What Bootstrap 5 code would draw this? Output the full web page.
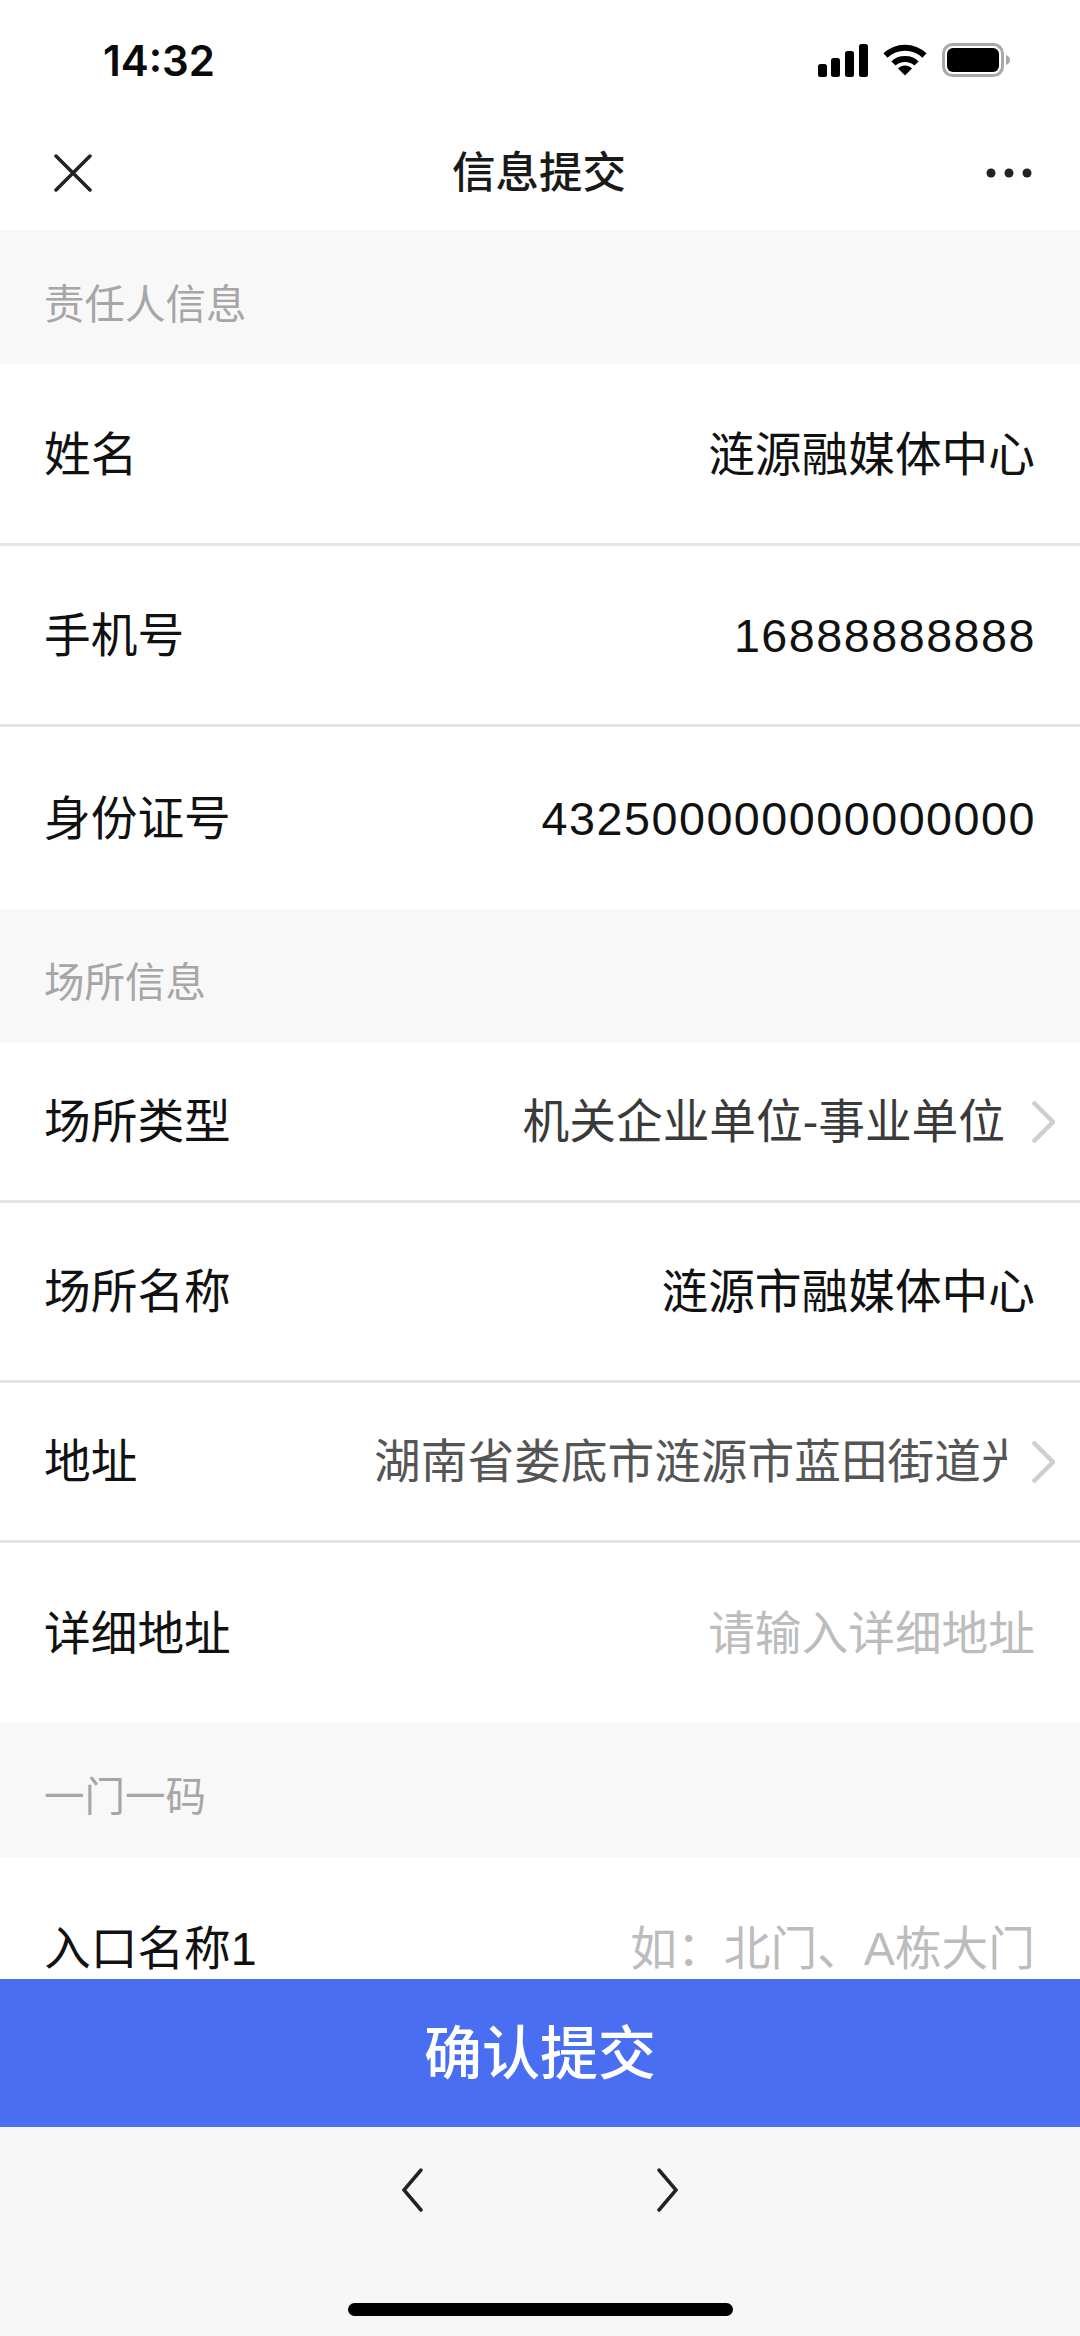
<!DOCTYPE html>
<html lang="zh-CN">
<head>
  <meta charset="UTF-8">
  <meta name="viewport" content="width=device-width, initial-scale=1.0">
  <title>信息提交</title>
  <link href="https://cdn.jsdelivr.net/npm/bootstrap@5.3.0/dist/css/bootstrap.min.css" rel="stylesheet">
  <style>
    html, body { height: 100%; }
    body {
      font-family: "Liberation Sans", "Noto Sans CJK SC", sans-serif;
      color: #111;
      background: #fff;
      overflow: hidden;
    }
    .screen { height: 2336px; }
    .status-bar { height: 115px; padding: 0 68px 0 103px; flex-shrink: 0; }
    .status-time { font-family: "Inter", sans-serif; font-size: 42px; font-weight: 600; color: #0a0a0a; margin-top: 6px; }
    .status-icons { gap: 15px; margin-top: 5px; }
    .title-bar { height: 115px; padding: 0 48px 0 54px; flex-shrink: 0; }
    .title-text { font-size: 43.500px; font-weight: 500; color: #1a1a1a; margin-top: 3px; }
    .form-scroll { overflow: hidden; min-height: 0; flex: 1 1 0; }
    .group-head {
      height: 134px;
      padding: 16px 44px 0;
      background: #f8f8f8;
      color: #a6a6a6;
      font-size: 40.500px;
    }
    .form-line.list-group-item {
      height: 181.500px;
      padding: 3px 45px 0 44px;
      border-bottom: 3px solid #e4e4e4;
      font-size: 46.700px;
      color: #111;
    }
    .form-line.line-mid.list-group-item { height: 180px; }
    .form-line.line-short.list-group-item { height: 160px; padding-right: 25px; }
    .form-line.line-tail.list-group-item { border-bottom: 0; height: 182px; }
    .line-value { overflow: hidden; white-space: nowrap; }
    .val-num { letter-spacing: 1.500px; margin-right: -1px; }
    .val-grey { color: #3a3a3a; margin-right: 2px; }
    .val-hint { color: #bcbcbc; }
    .addr-clip { width: 633px; color: #555; }
    .short-value { gap: 24px; }
    .submit-btn.btn {
      height: 148px;
      background: #4a6ef2;
      color: #fff;
      font-size: 58px;
      font-weight: 500;
      border: 0;
      border-radius: 0;
      flex-shrink: 0;
    }
    .bottom-bar { height: 209px; background: #f7f7f8; flex-shrink: 0; }
    .pager { gap: 234px; padding-top: 41px; }
    .home-bar { width: 385px; height: 13px; background: #000; border-radius: 7px; margin: 91px auto 0; }
  </style>
</head>
<body>
  <div class="screen d-flex flex-column">
    <!-- status bar -->
    <div class="status-bar d-flex justify-content-between align-items-center">
      <span class="status-time">14:32</span>
      <div class="status-icons d-flex align-items-center">
        <svg width="50" height="33" viewBox="0 0 50 33"><rect x="0" y="20" width="9" height="13" rx="2.500"/><rect x="13" y="14" width="9" height="19" rx="2.500"/><rect x="27" y="7" width="9" height="26" rx="2.500"/><rect x="41" y="0" width="9" height="33" rx="2.500"/></svg>
        <svg width="44" height="32" viewBox="0 0 44 32" fill="none" stroke="#000" stroke-width="6"><path d="M2.500 11.500C13.500 1 30.500 1 41.500 11.500"/><path d="M10.500 19.500C16.500 13.500 27.500 13.500 33.500 19.500"/><path d="M15 24.500L22 31.500L29 24.500C25 20.500 19 20.500 15 24.500Z" fill="#000" stroke="none"/></svg>
        <svg width="70" height="34" viewBox="0 0 70 34"><rect x="1.500" y="1.500" width="59" height="31" rx="9" fill="none" stroke="#a9a9a9" stroke-width="3"/><rect x="5" y="5" width="52" height="24" rx="6"/><path d="M64 12C67 13 68 15 68 17S67 21 64 22Z" fill="#a9a9a9"/></svg>
      </div>
    </div>

    <!-- title bar -->
    <div class="title-bar d-flex justify-content-between align-items-center">
      <svg width="38" height="38" viewBox="0 0 38 38" fill="none" stroke="#222" stroke-width="3.500" stroke-linecap="round"><path d="M2 2L36 36M36 2L2 36"/></svg>
      <span class="title-text">信息提交</span>
      <svg width="46" height="10" viewBox="0 0 46 10" fill="#222"><circle cx="5" cy="5" r="4.500"/><circle cx="23" cy="5" r="4.500"/><circle cx="41" cy="5" r="4.500"/></svg>
    </div>

    <!-- form -->
    <div class="form-scroll">
      <div class="group-head d-flex align-items-center">责任人信息</div>
      <ul class="list-group list-group-flush">
        <li class="list-group-item form-line d-flex justify-content-between align-items-center"><span>姓名</span><span class="line-value">涟源融媒体中心</span></li>
        <li class="list-group-item form-line d-flex justify-content-between align-items-center"><span>手机号</span><span class="line-value val-num">16888888888</span></li>
        <li class="list-group-item form-line d-flex justify-content-between align-items-center"><span>身份证号</span><span class="line-value val-num">432500000000000000</span></li>
      </ul>
      <div class="group-head d-flex align-items-center">场所信息</div>
      <ul class="list-group list-group-flush">
        <li class="list-group-item form-line line-short d-flex justify-content-between align-items-center">
          <span>场所类型</span>
          <span class="short-value d-flex align-items-center">
            <span class="line-value val-grey">机关企业单位-事业单位</span>
            <svg width="24" height="44" viewBox="0 0 24 44" fill="none" stroke="#cfcfcf" stroke-width="4.500"><path d="M2 2L22 22L2 42"/></svg>
          </span>
        </li>
        <li class="list-group-item form-line line-mid d-flex justify-content-between align-items-center"><span>场所名称</span><span class="line-value">涟源市融媒体中心</span></li>
        <li class="list-group-item form-line line-short d-flex justify-content-between align-items-center">
          <span>地址</span>
          <span class="short-value d-flex align-items-center">
            <span class="line-value addr-clip">湖南省娄底市涟源市蓝田街道光明路</span>
            <svg width="24" height="44" viewBox="0 0 24 44" fill="none" stroke="#cfcfcf" stroke-width="4.500"><path d="M2 2L22 22L2 42"/></svg>
          </span>
        </li>
        <li class="list-group-item form-line line-mid d-flex justify-content-between align-items-center"><span>详细地址</span><span class="line-value val-hint">请输入详细地址</span></li>
      </ul>
      <div class="group-head d-flex align-items-center">一门一码</div>
      <ul class="list-group list-group-flush">
        <li class="list-group-item form-line line-tail d-flex justify-content-between align-items-center"><span>入口名称1</span><span class="line-value val-hint">如：北门、A栋大门</span></li>
      </ul>
    </div>

    <button type="button" class="btn submit-btn w-100 d-flex justify-content-center align-items-center">确认提交</button>

    <!-- browser toolbar -->
    <div class="bottom-bar">
      <div class="pager d-flex justify-content-center">
        <svg width="22" height="44" viewBox="0 0 22 44" fill="none" stroke="#222" stroke-width="3.500" stroke-linecap="round"><path d="M20 2L3 22L20 42"/></svg>
        <svg width="22" height="44" viewBox="0 0 22 44" fill="none" stroke="#222" stroke-width="3.500" stroke-linecap="round"><path d="M2 2L19 22L2 42"/></svg>
      </div>
      <div class="home-bar"></div>
    </div>
  </div>
  <script src="https://cdn.jsdelivr.net/npm/bootstrap@5.3.0/dist/js/bootstrap.bundle.min.js"></script>
</body>
</html>
